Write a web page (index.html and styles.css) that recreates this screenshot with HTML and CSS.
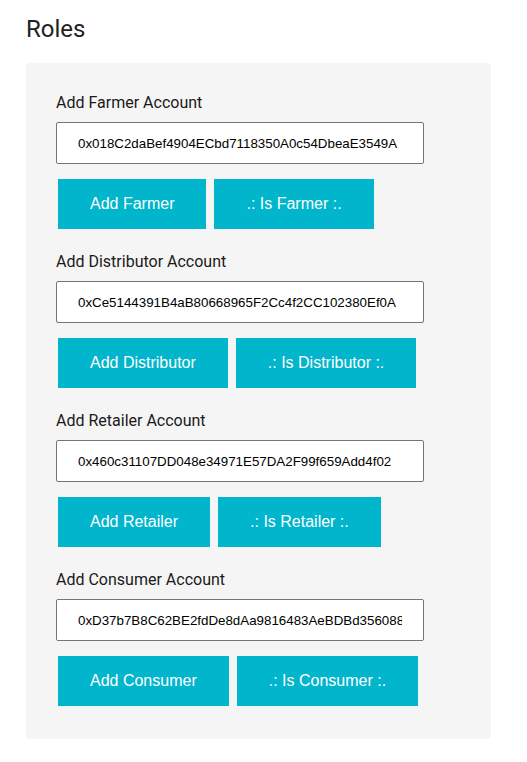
FILE: index.html
```html
<!DOCTYPE html>
<html>
<head>
<meta charset="utf-8">
<link rel="stylesheet" href="styles.css">
</head>
<body>
<h2 class="title">Roles</h2>
<div class="panel">
  <div class="role">
    <label class="label">Add Farmer Account</label>
    <input class="addr" type="text" value="0x018C2daBef4904ECbd7118350A0c54DbeaE3549A">
    <div class="actions">
      <button class="btn">Add Farmer</button>
      <button class="btn btn-is">.: Is Farmer :.</button>
    </div>
  </div>
  <div class="role">
    <label class="label">Add Distributor Account</label>
    <input class="addr" type="text" value="0xCe5144391B4aB80668965F2Cc4f2CC102380Ef0A">
    <div class="actions">
      <button class="btn">Add Distributor</button>
      <button class="btn btn-is">.: Is Distributor :.</button>
    </div>
  </div>
  <div class="role">
    <label class="label">Add Retailer Account</label>
    <input class="addr" type="text" value="0x460c31107DD048e34971E57DA2F99f659Add4f02">
    <div class="actions">
      <button class="btn">Add Retailer</button>
      <button class="btn btn-is">.: Is Retailer :.</button>
    </div>
  </div>
  <div class="role">
    <label class="label">Add Consumer Account</label>
    <input class="addr" type="text" value="0xD37b7B8C62BE2fdDe8dAa9816483AeBDBd356088">
    <div class="actions">
      <button class="btn">Add Consumer</button>
      <button class="btn btn-is">.: Is Consumer :.</button>
    </div>
  </div>
</div>
</body>
</html>
```

FILE: styles.css
```css
html, body {
  margin: 0;
  padding: 0;
  background: #ffffff;
}
body {
  padding: 0 26px;
  font-family: Roboto, "Liberation Sans", Arial, sans-serif;
  color: #212121;
}
.title {
  margin: 15px 0 0 0;
  font-size: 24px;
  line-height: 28px;
  font-weight: 400;
  color: #222222;
}
.panel {
  margin-top: 20px;
  width: 465px;
  box-sizing: border-box;
  background: #f5f5f5;
  border-radius: 4px;
  padding: 30px 30px 33px 30px;
  display: flex;
  flex-direction: column;
  gap: 23px;
}
.role {
  display: flex;
  flex-direction: column;
}
.label {
  font-size: 16px;
  line-height: 20px;
  color: #1a1a1a;
  margin-bottom: 9px;
}
.addr {
  box-sizing: border-box;
  width: 368px;
  height: 42px;
  margin: 0;
  padding: 0 21px;
  border: 1px solid #767676;
  border-radius: 2px;
  background: #ffffff;
  font-family: "Liberation Sans", Arial, sans-serif;
  font-size: 13.333px;
  color: #000000;
  outline: none;
}
.actions {
  display: flex;
  gap: 8px;
  margin-top: 15px;
  padding-left: 2px;
}
.btn {
  height: 50px;
  margin: 0;
  padding: 0 32px;
  border: none;
  border-radius: 0;
  background: #00b5cc;
  color: #ffffff;
  font-family: "Liberation Sans", Arial, sans-serif;
  font-size: 16px;
  cursor: pointer;
}
.btn-is {
  padding: 0 32px;
}
```
